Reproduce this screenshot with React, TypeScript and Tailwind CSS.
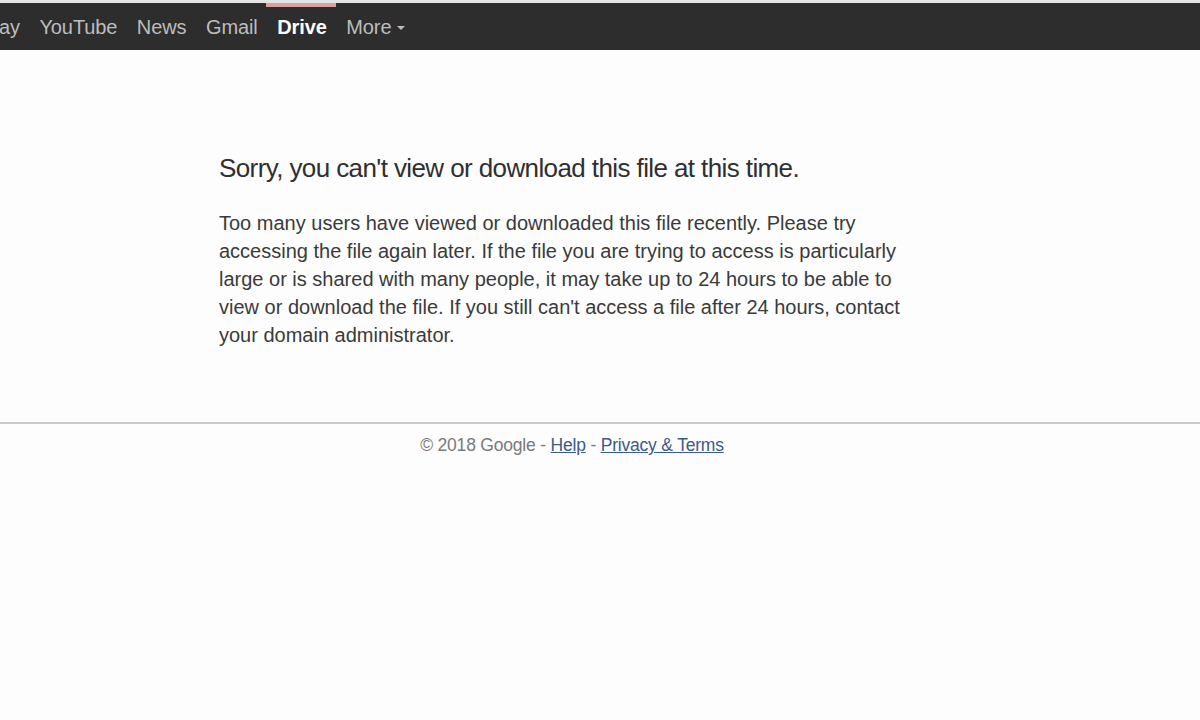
import React from "react";

export default function App() {
  const font = { fontFamily: '"Liberation Sans", Arial, sans-serif' };
  return (
    <div className="w-[1200px] h-[720px] bg-[#fdfdfd] overflow-hidden" style={font}>
      <div className="h-[3px] bg-[#e4e4e4]" />
      <div className="relative h-[47px] bg-[#2d2d2d] flex items-center text-[20px] text-[#bdbdbd] tracking-[-0.1px]">
        <div className="absolute top-0 left-[266px] w-[70px] h-[4px] bg-[#d9a19b]" />
        <div className="flex items-center gap-[19.5px] -ml-[1px] mt-[1px]">
          <span>ay</span>
          <span>YouTube</span>
          <span>News</span>
          <span>Gmail</span>
          <span className="font-bold text-white">Drive</span>
          <span className="flex items-center gap-[6px]">
            More
            <svg width="8" height="5" viewBox="0 0 8 5" className="mt-[2px]">
              <path d="M0 0 L8 0 L4 4 Z" fill="#bdbdbd" />
            </svg>
          </span>
        </div>
      </div>
      <div className="h-[372px] pl-[219px] pt-[102px] text-[#3a3a3a]">
        <h1 className="text-[26px] leading-[32px] tracking-[-0.6px] text-[#2f2f2f]">
          Sorry, you can't view or download this file at this time.
        </h1>
        <p className="mt-[25px] text-[20px] leading-[28px] tracking-[0px] text-[#3a3a3a]">
          Too many users have viewed or downloaded this file recently. Please try
          <br />
          accessing the file again later. If the file you are trying to access is particularly
          <br />
          large or is shared with many people, it may take up to 24 hours to be able to
          <br />
          view or download the file. If you still can't access a file after 24 hours, contact
          <br />
          your domain administrator.
        </p>
      </div>
      <div className="h-[2px] bg-[#cbcbcb]" />
      <div className="flex justify-center pr-[56px] pt-[8px] text-[17.5px] text-[#7a7a7a] tracking-[-0.2px]">
        <span>
          © 2018 Google - <span className="underline text-[#3b5a8c]">Help</span> -{" "}
          <span className="underline text-[#3b5a8c]">Privacy &amp; Terms</span>
        </span>
      </div>
    </div>
  );
}
